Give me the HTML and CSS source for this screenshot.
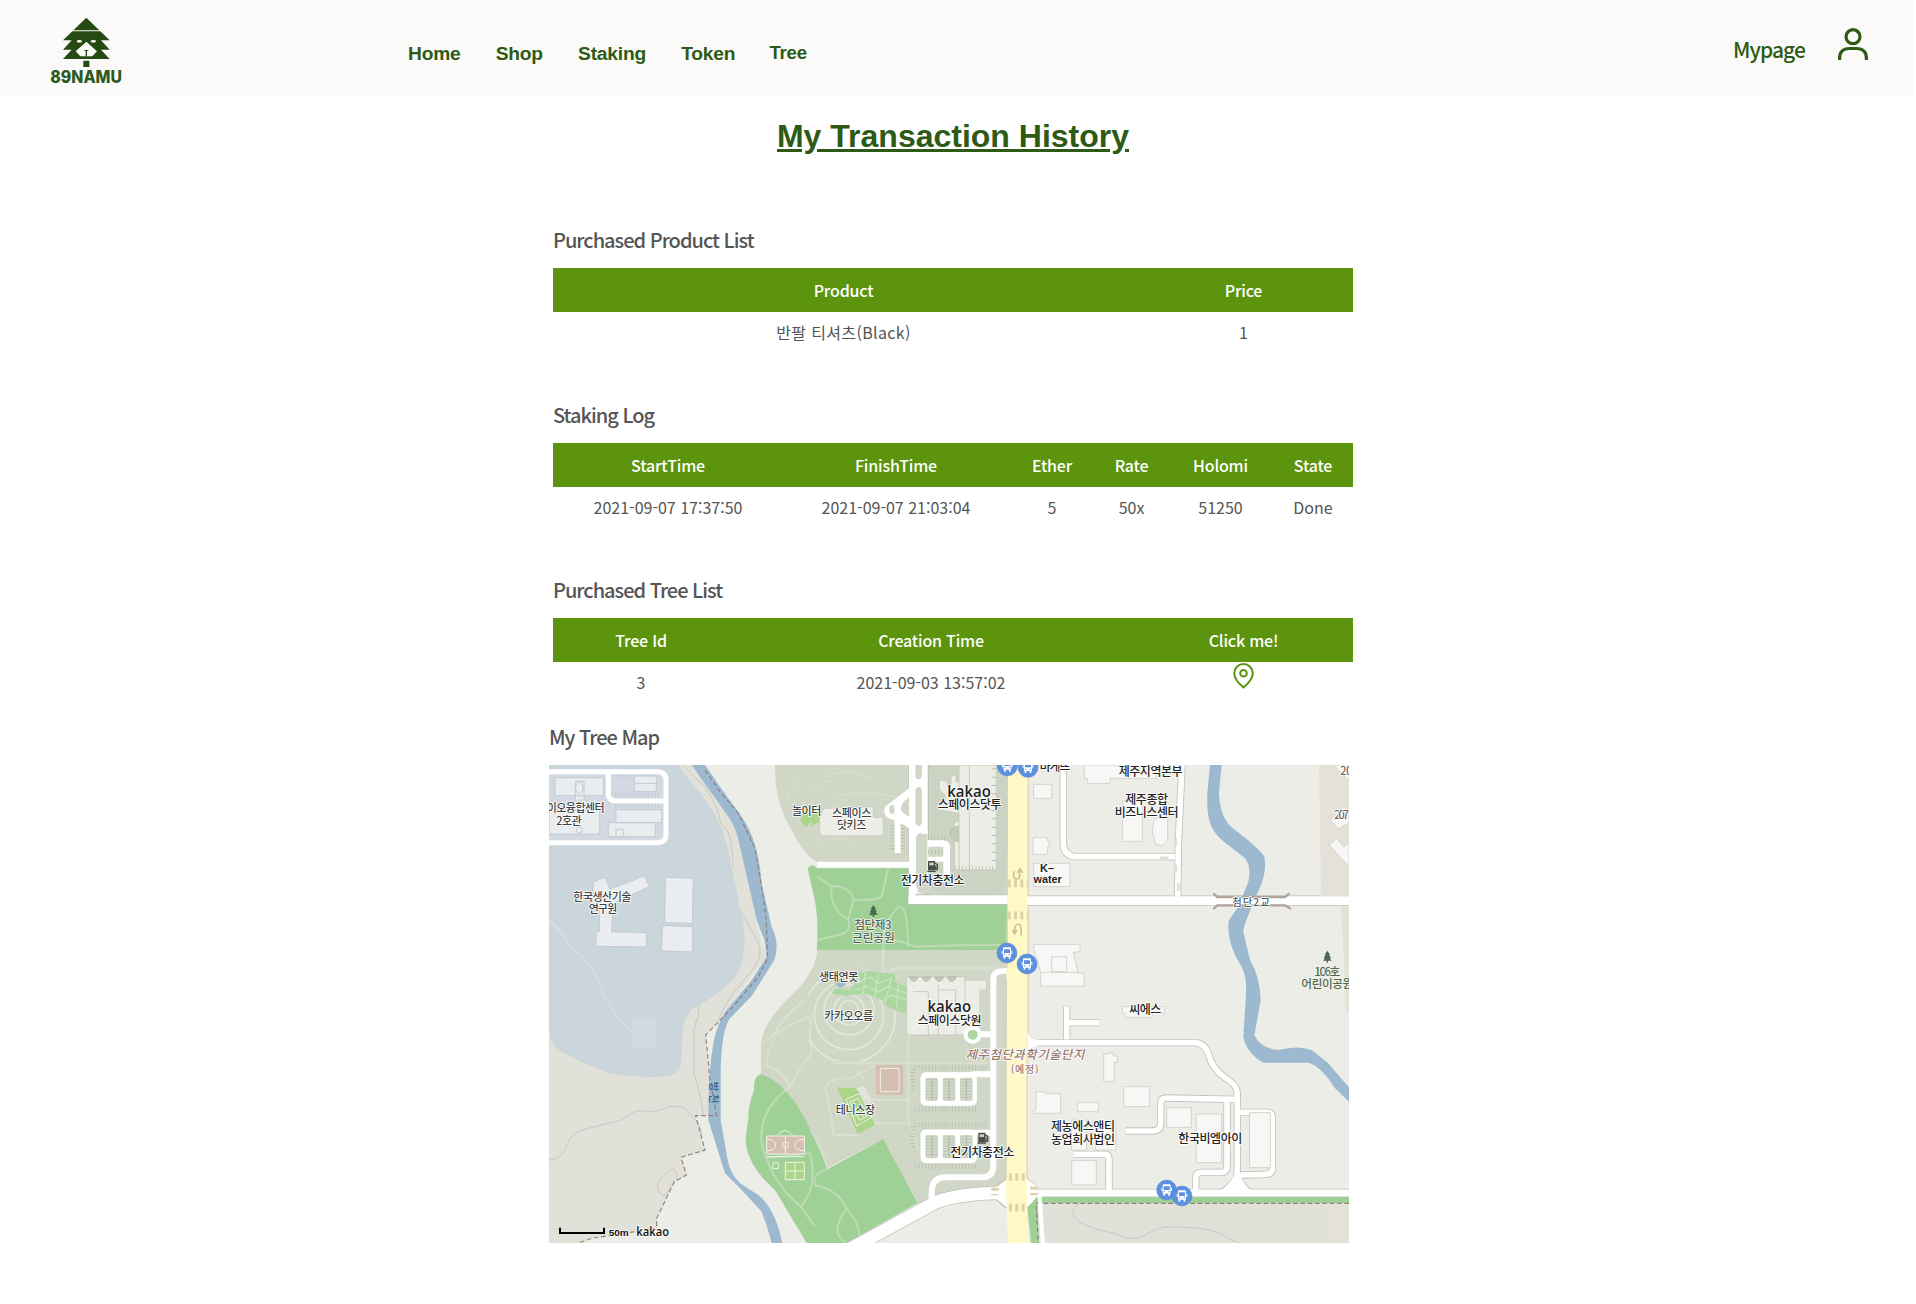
FILE: index.html
```html
<!DOCTYPE html>
<html lang="ko">
<head>
<meta charset="utf-8">
<title>89NAMU - My Transaction History</title>
<link rel="stylesheet" href="styles.css">
</head>
<body>
<header class="header">
  <svg class="logo" viewBox="0 0 240 291">
    <path class="logo-fill" d="M121 53L160 91H82zM79 94H163L191 121H165L191 149H165L191 177H51L77 149H51L77 121H51zM112 182H130V201H112z"/>
    <path class="logo-cut" d="M121 125L153 154L139 169H103L89 154z"/>
    <ellipse class="logo-cut" cx="100" cy="124" rx="8" ry="4"/><ellipse class="logo-cut" cx="142" cy="124" rx="8" ry="4"/>
    <path class="logo-fill" d="M119 154L113 150H129L123 154V169H119z"/>
    <text class="logo-text" x="13" y="248" textLength="215" lengthAdjust="spacingAndGlyphs">89NAMU</text>
  </svg>
  <nav class="nav">
    <a>Home</a><a>Shop</a><a>Staking</a><a>Token</a><a class="nav-tree">Tree</a>
  </nav>
  <a class="mypage">Mypage</a>
  <svg class="user" viewBox="0 0 30 32"><circle cx="15" cy="8.7" r="7"/><path d="M1.6 32V30.500Q1.600 20.500 11.500 20.500H18.500Q28.400 20.500 28.400 30.500V32"/></svg>
</header>
<main class="main">
  <h1 class="title">My Transaction History</h1>
  <section class="block">
    <h2>Purchased Product List</h2>
    <table>
      <colgroup><col class="w580"><col class="w220"></colgroup>
      <tr><th>Product</th><th>Price</th></tr>
      <tr><td class="product">반팔 티셔츠(Black)</td><td>1</td></tr>
    </table>
  </section>
  <section class="block">
    <h2>Staking Log</h2>
    <table>
      <colgroup><col class="w229"><col class="w227"><col class="w85"><col class="w74"><col class="w104"><col class="w81"></colgroup>
      <tr><th>StartTime</th><th>FinishTime</th><th>Ether</th><th>Rate</th><th>Holomi</th><th>State</th></tr>
      <tr><td>2021-09-07 17:37:50</td><td>2021-09-07 21:03:04</td><td>5</td><td>50x</td><td>51250</td><td>Done</td></tr>
    </table>
  </section>
  <section class="block">
    <h2>Purchased Tree List</h2>
    <table>
      <colgroup><col class="w175"><col class="w405"><col class="w220"></colgroup>
      <tr><th>Tree Id</th><th>Creation Time</th><th>Click me!</th></tr>
      <tr><td>3</td><td>2021-09-03 13:57:02</td><td class="pin-cell"><svg class="pin" viewBox="0 0 21 26"><path d="M10.500 24.500C7 21.500 1.200 16 1.200 10.200A9.300 9.200 0 0 1 19.800 10.200C19.800 16 14 21.500 10.500 24.500z"/><circle cx="10.500" cy="10.300" r="3.300"/></svg></td></tr>
    </table>
  </section>
  <section class="map-block">
    <h2>My Tree Map</h2>
    <svg class="map" viewBox="12 15 2400 1434">
      <defs>
        <g id="bus"><circle r="30" class="bus-bg"/><path class="bus-fg" d="M-12 -14Q-12 -17 -9 -17H9Q12 -17 12 -14V11H10V17H5V11H-5V17H-10V11H-12zM-16 -7H-13V3H-16zM13 -7H16V3H13z"/><path class="bus-bg2" d="M-9 -11H9V0H-9zM-9 4H-5V7H-9zM5 4H9V7H5z"/></g>
        <g id="fuel"><path class="dark" d="M-13 -16H8V12H-13zM-15 13H10V17H-15z"/><path class="olive" d="M-9 -11H4V-3H-9z"/><path class="fuel-hose" d="M8 -10L15 -5V10H10V0H8"/></g>
        <g id="fir"><path d="M0 -18L8 -6H5L11 4H7L13 12H2V18H-2V12H-13L-7 4H-11L-5 -6H-8z"/></g>
        <g id="lot"><rect class="lot-base" width="172" height="104" rx="18"/><g class="stall"><rect x="16" y="18" width="38" height="70" rx="6"/><rect x="68" y="18" width="38" height="70" rx="6"/><rect x="120" y="18" width="38" height="70" rx="6"/></g><path class="stall-lines" d="M24 22V84M44 22V84M76 22V84M96 22V84M128 22V84M148 22V84"/><path class="stall-line" d="M35 22V84M87 22V84M139 22V84"/><path class="ticks" d="M-14 -12H200"/><path class="ticks" d="M-14 113H172"/><path class="ticks" d="M-22 -8V60"/></g>
        <clipPath id="ring-clip"><path d="M790 640H1085V905H830L790 860z"/></clipPath>
      </defs>
      <rect class="land" x="12" y="15" width="2400" height="1434"/>

      <path class="beige" d="M12 15H480L580 230L640 510L665 590L545 750L515 790L482 825L495 960L490 1067H450L480 1170L408 1192L424 1245L388 1265L335 1375V1405L250 1418L140 1435L100 1449H12z"/>
      <path class="contour" d="M415 15Q440 45 480 80Q520 140 527 190Q555 215 560 255L565 320M586 450Q610 490 640 550Q655 580 630 620L560 705Q530 750 517 790M462 730L460 770Q443 800 447 850V940Q468 1010 475 1065M12 1200Q55 1198 68 1150Q80 1115 130 1105L230 1080Q270 1045 300 1053Q320 1060 350 1048Q410 1022 440 1065Q470 1100 470 1125M395 1260Q400 1225 378 1228Q340 1255 337 1275Q340 1310 362 1305Q375 1280 388 1265"/>
      <path class="campus" d="M12 15H400C425 55 450 75 470 105C525 175 548 245 560 320L595 490Q608 580 575 645Q540 695 440 748Q415 775 413 820L408 915Q405 940 375 947Q290 957 200 942Q130 920 50 875Q12 850 12 815z"/>
      <path class="campus-path" d="M12 480Q55 520 75 560Q140 610 155 650Q180 720 205 750Q225 790 262 815"/>
      <path class="campus-lot" d="M259 776L330 774L332 862L262 864zM12 36H363V246H12z"/>
      <path class="stall-line2" d="M205 47H265M200 105H350M210 137H350"/>
      <path class="campus-road" d="M12 35H335Q363 35 363 60V225Q363 248 335 248H12M190 38V98Q190 123 215 123H360"/>
      <path class="campus-b" d="M30 53H175V107H30zM12 150H164V222H12zM91 64H117V125H91zM100 120H125V150H100zM268 48H334V94H268zM268 70H334M213 149H350V188H213zM190 188H331V230H190zM213 208H236V230H213zM145 366L180 351L195 388L299 347L313 380L205 430L200 515L304 518V561L152 559L154 515H163V440L143 430zM361 352L445 354L442 490L359 488zM352 496L442 500V576L350 573z"/>
      <ellipse class="campus-b" cx="103" cy="83" rx="11" ry="18"/><circle class="campus-b" cx="103" cy="210" r="9"/>

      <path class="river" d="M440 15L500 100L550 170Q575 205 585 260L635 480L658 540L665 590L620 660L545 750Q510 800 502 870Q490 940 490 1080L540 1240L590 1290L650 1355Q668 1400 680 1449H712Q690 1345 640 1305L585 1270Q555 1240 548 1200L527 1080V930Q530 810 555 775L620 708L688 600Q705 550 680 500L650 370Q640 240 590 170L525 80L480 15z"/>
      <path class="border" d="M480 30L525 95L580 160L630 265L648 370L663 470L668 595L640 650L560 745L482 825L495 960L515 1067H452L480 1170L408 1192L424 1245L388 1265L335 1375V1405L250 1418L140 1435L100 1449"/>

      <path class="park" d="M690 15Q688 130 740 210Q780 290 815 305V325H1090V15zM1090 15H1388V405H1140L1090 380zM817 568H1388V1270L1330 1300L1120 1330L1015 1137L845 1225L795 1105Q730 980 648 945V850Q655 790 725 720Q815 640 817 568z"/>
      <path class="park-path thin" d="M725 120Q750 55 800 35M760 200Q770 80 860 60M840 50Q900 20 985 55M860 115Q930 85 1050 110M815 250Q900 220 930 255M1390 630H1040Q960 650 925 600"/>
      <path class="olive2" d="M1150 15H1385V370L1360 402H1140z"/>
      <path class="green" d="M790 335Q785 318 805 315L815 323H1090V432H1388V570H815Q822 480 808 415zM650 943Q625 945 627 990Q608 1040 610 1080Q598 1140 605 1165Q620 1230 690 1290L785 1449H905L1118 1328L1015 1137L848 1227L795 1105Q730 970 650 943z"/>
      <path class="park-path" d="M817 350L860 378Q850 440 910 480Q920 520 880 525L817 540M860 378Q920 380 925 418Q980 425 1010 410L1030 323M910 480L925 418M1015 570V535Q1015 490 1060 440Q1090 435 1088 560M1015 535Q1080 545 1110 560Q1200 555 1388 555"/>
      <path class="park-path" d="M1015 570V640M1035 625H1380M650 850Q715 800 795 770M780 720Q690 790 680 850Q655 920 670 920Q720 940 735 980M735 980Q760 930 800 880Q790 820 800 760M735 980Q640 1050 650 1150Q680 1270 768 1340Q820 1280 795 1180L660 1195M768 1340L810 1400M795 1110Q830 1160 848 1227Q800 1240 810 1275Q880 1290 905 1345Q945 1390 945 1440M905 1345Q850 1420 905 1449M1090 825V1090L1140 1215M860 910H1330M1090 1090H980M865 1125H940M865 1125Q850 1000 840 990Q850 950 920 955L990 915M1090 1020H980M930 930L960 960"/>
      <g class="rings" clip-path="url(#ring-clip)"><circle cx="912" cy="750" r="28"/><circle cx="912" cy="750" r="45"/><circle cx="912" cy="750" r="75"/><circle cx="912" cy="765" r="104"/><circle cx="912" cy="770" r="138"/></g>
      <path class="bright" d="M765 140L800 135L812 150L795 160L812 165V190L795 187L785 202L768 185zM800 155L840 160L838 178L815 190L800 200zM876 983L938 984L990 1095L938 1122z"/>
      <path class="court-line" d="M903 1018L945 1000L980 1072L935 1098zM914 1026L940 1015L967 1068L944 1081zM926 1042L956 1070M922 1050L945 1040"/>
      <path class="court-side" d="M932 985L957 977L980 1020L973 1035z"/>
      <path class="grove" d="M935 640L975 632L1050 643V665L1085 680V760Q1030 750 1010 720L960 700L900 708L860 700L870 685L915 690L930 670L950 668z"/>
      <path class="grove-line" d="M945 665L975 650L1000 670L1040 655M930 690L965 680L1000 695L1030 680L1085 700M960 632L955 700M1000 640L990 710M1040 650L1020 730M1085 720L1040 705L1010 725M1060 670L1055 745"/>
      <path class="river" d="M865 665L895 650L902 675L885 685z"/>
      <path class="clay" d="M993 915H1074V1004H993zM665 1128H778V1182H665z"/>
      <path class="court-line" d="M1006 925H1062V995H1006zM665 1128H778V1182H665zM665 1190H778M721 1128V1182M665 1138Q692 1138 692 1155Q692 1172 665 1172M778 1138Q750 1138 750 1155Q750 1172 778 1172M695 1128Q720 1095 745 1128"/>
      <circle class="court-line" cx="721" cy="1155" r="9"/>
      <path class="bright court-line" d="M721 1207H778V1259H721zM750 1207V1259M721 1233H778"/>
      <path class="court-line" d="M684 1208H700V1226H684z"/>

      <g class="road-edge"><path class="w20" d="M815 314H1095M1385 633Q1345 630 1345 655V1215Q1345 1250 1315 1252H1200Q1160 1252 1160 1300V1320M1285 823H1345M1275 943H1345M1275 1118H1345"/>
        <path class="w18" d="M1555 15V255Q1560 290 1595 290H1890M1898 410L1900 250L1911 15M1565 740V838M1565 788H1663M1448 848H1945Q1978 848 1990 880Q2000 925 2040 953Q2077 975 2077 1000V1290M1742 1113H1825Q1847 1113 1847 1090V1030Q1847 1014 1865 1014L2070 1018M2046 1018V1220Q2046 1237 2025 1237H1970Q1952 1237 1952 1255V1295M2080 1057H2165Q2182 1057 2182 1075V1225Q2182 1243 2160 1243L2087 1245M1585 1183H1680Q1692 1183 1692 1200V1290"/>
        <path class="w28" d="M1090 419H1390M1440 422H2412"/><path class="w22" d="M1440 1299H2412"/><path class="w44" d="M910 1470L1160 1333Q1220 1300 1400 1297"/>
        <path class="flare-edge" d="M2026 1290Q2066 1262 2069 1240M2120 1290Q2090 1270 2086 1240M1355 1278L1390 1253M1355 1320L1385 1345M1445 1253L1480 1287M1445 1345L1478 1313"/></g>
      <path class="olive-line" d="M1092 15H1150V405H1092z"/>
      <g class="road"><path class="w20" d="M815 314H1095M1385 633Q1345 630 1345 655V1215Q1345 1250 1315 1252H1200Q1160 1252 1160 1300V1320M1285 823H1345M1275 943H1345M1275 1118H1345"/>
        <path class="w18" d="M1555 15V255Q1560 290 1595 290H1890M1898 410L1900 250L1911 15M1565 740V838M1565 788H1663M1448 848H1945Q1978 848 1990 880Q2000 925 2040 953Q2077 975 2077 1000V1290M1742 1113H1825Q1847 1113 1847 1090V1030Q1847 1014 1865 1014L2070 1018M2046 1018V1220Q2046 1237 2025 1237H1970Q1952 1237 1952 1255V1295M2080 1057H2165Q2182 1057 2182 1075V1225Q2182 1243 2160 1243L2087 1245M1585 1183H1680Q1692 1183 1692 1200V1290"/>
        <path class="w28" d="M1090 419H1390M1440 422H2412"/><path class="w22" d="M1440 1299H2412"/><path class="w44" d="M910 1470L1160 1333Q1220 1300 1400 1297"/></g>
      <path class="white" d="M1092 15H1148V240H1195Q1215 242 1215 262V345H1195V305H1150V345L1092 433zM2026 1292Q2066 1262 2070 1235H2085Q2090 1270 2120 1292zM1355 1280L1390 1255V1345L1355 1318zM1440 1250L1480 1285V1312L1440 1347zM1448 815Q1450 840 1480 838V858Q1450 860 1448 885z"/>
      <path class="olive" d="M1111 15H1131V50Q1121 66 1111 50zM1111 90Q1121 70 1131 90V190Q1121 206 1111 190zM1113 235Q1120 212 1132 222H1147V345Q1150 385 1180 403H1145Q1113 400 1113 370zM1150 260H1195V290H1150z"/>
      <path class="white" d="M1092 85L1020 140Q1010 175 1050 180L1092 205z"/><path class="olive" d="M1092 112Q1060 135 1070 155L1092 170zM1033 140Q1042 128 1048 140V160Q1038 166 1033 155z"/>
      <path class="white" d="M1049 175H1067V279H1049z"/><path class="ticks vert" d="M1042 195V275"/><path class="ticks vert" d="M1073 195V275"/><path class="ticks" d="M1158 235H1205"/><path class="ticks" d="M1150 275H1195"/>
      <path class="pale" d="M823 177L835 145L985 140V172H1015V228H825zM1240 15H1354V330H1228V185H1240V160L1180 150V125H1200V105L1183 90V62H1207V75H1218V45H1233V65H1240z"/>
      <path class="pale" d="M1242 15V320M1273 15V330M1085 650H1260V660H1325V690H1305V825H1085zM1180 675V825M1180 690H1232V825M1105 695H1150V825M1260 650V730"/>
      <path class="ticks" d="M1232 324H1352"/><path class="ticks wide" d="M1347 25V325"/>
      <path class="hatch" d="M1240 198Q1215 205 1216 225Q1220 240 1240 245zM1092 651H1120Q1106 678 1092 651zM1130 651H1158Q1144 678 1130 651zM1168 651H1196Q1182 678 1168 651zM1206 651H1234Q1220 678 1206 651z"/>
      <use href="#lot" x="1125" y="935"/><use href="#lot" x="1125" y="1107"/>
      <path class="white" d="M1280 935H1345V951H1280zM1280 1110H1345V1126H1280z"/>
      <circle class="white" cx="1283" cy="824" r="27"/><circle class="grove" cx="1283" cy="824" r="15"/>

      <path class="green" d="M1447 1345L1475 1311H2412V1330H1478L1482 1449H1458z"/>
      <path class="beige" d="M1478 1331H2412V1449H1482z"/>
      <path class="contour" d="M1605 1331Q1560 1360 1610 1390Q1650 1410 1710 1420Q1755 1445 1790 1430Q1850 1395 1880 1401Q2010 1402 2040 1430L2082 1449"/>
      <path class="beige2" d="M2322 15H2412V408H2328zM2388 440H2412V760Q2395 740 2402 710zM2340 1332H2412V1449H2370z"/>
      <path class="border" d="M2412 1330H1473L1480 1449"/>
      <path class="lane" d="M1483 1300L1494 1455"/>

      <path class="river" d="M1995 15L1987 100Q1983 175 2005 210Q2020 235 2050 255L2100 295Q2120 320 2110 365L2080 440L2052 480Q2045 510 2060 560Q2070 590 2090 620Q2105 650 2103 690L2102 720L2095 830Q2105 880 2155 908H2290Q2330 920 2370 985L2412 1025V982Q2370 935 2350 910L2300 870Q2260 855 2200 870Q2145 865 2128 825L2140 760L2147 720Q2145 650 2115 600L2095 515Q2095 500 2120 440L2150 370Q2165 325 2158 290Q2140 262 2070 210Q2025 180 2022 100L2030 15z"/>
      <path class="bridge-deck" d="M1990 423H2240"/>
      <path class="bridge" d="M2007 402L2017 411H2220L2231 402M2007 445L2017 436H2220L2235 445"/>

      <path class="bldg" d="M1466 73H1520V115H1466zM1464 233H1507V245H1513V262H1507V283H1464zM1466 310H1575V380H1466zM1467 553H1605V575L1585 577L1600 640H1617V678H1487V635L1467 570zM1520 590H1565V635H1520zM1490 637H1600M1618 15H1835V55H1695V70H1628V55H1618zM1733 122H1792V244H1733zM1828 175H1868V240L1850 258L1830 250L1822 212zM1732 740H1858V760H1822V772H1740V760H1732zM1676 882H1693V878H1705V888H1717V907H1708V964H1676zM1736 980H1814V1040H1736zM1597 1027H1660V1055H1597zM1865 1043H1939V1102H1865zM1954 1062H2030V1208H1954zM2113 1058H2176V1223H2113zM1465 1050H1473V995H1502V1001H1547V1060H1465zM1580 1202H1654V1275H1580zM1580 1080H1625V1170H1580zM1652 1090H1713V1170H1652zM2356 180L2395 140L2412 155V190L2380 206zM2353 255L2375 235L2395 260L2412 250V320zM2365 15L2412 62V15z"/>

      <path class="yellow" d="M1388 15H1448L1445 900V1290L1450 1449H1389L1383 1290V900z"/>
      <path class="yellow-edge" d="M1387 15V405M1450 15V405M1387 433V625M1450 440V820M1384 660V1255M1446 880V1255"/>
      <path class="zebra" d="M1388 370H1448M1388 466H1448M1392 1251H1445M1392 1343H1445"/><path class="zebra" d="M1350 1283V1306M1467 1280V1306"/>
      <path class="turn" d="M1406 334V346Q1406 357 1415 357Q1424 357 1424 346V330M1417 338L1425 327L1433 338M1428 527V505Q1427 492 1418 492Q1409 494 1409 518M1402 510L1409 521L1416 510"/>
      <path class="road-mark" d="M1845 294H1870M1892 235V258M1892 315V338M1900 370V392"/>

      <use href="#bus" x="1387" y="18"/><use href="#bus" x="1449" y="22"/><use href="#bus" x="1386" y="579"/><use href="#bus" x="1446" y="612"/><use href="#bus" x="1865" y="1290"/><use href="#bus" x="1911" y="1308"/>
      <use href="#fuel" x="1162" y="319"/><use href="#fuel" x="1313" y="1134"/><use class="fir" href="#fir" x="985" y="453"/><use class="fir" href="#fir" x="2347" y="590"/>

      <g class="label">
        <text x="92" y="155" textLength="174">이오융합센터</text><text x="72" y="194" textLength="76">2호관</text>
        <text x="172" y="422" textLength="174">한국생산기술</text><text x="174" y="458" textLength="86">연구원</text>
        <text x="785" y="165" textLength="88">놀이터</text><text x="920" y="172" textLength="118">스페이스</text><text x="920" y="208" textLength="88">닷키즈</text>
        <text class="strong" x="1274" y="148" textLength="192">스페이스닷투</text><text class="brand" x="1272" y="112" textLength="131" lengthAdjust="spacingAndGlyphs">kakao</text>
        <text class="strong" x="1163" y="374" textLength="192">전기차충전소</text><text class="strong" x="1530" y="33" textLength="92">바게뜨</text>
        <text class="strong latin" x="1506" y="336">K–</text><text class="strong latin" x="1508" y="368" textLength="85">water</text>
        <text class="green-label" x="984" y="508" textLength="112">첨단제3</text><text class="green-label" x="985" y="547" textLength="128">근린공원</text>
        <text x="881" y="662" textLength="118">생태연못</text><text x="911" y="780" textLength="146">카카오오름</text>
        <text class="brand" x="1213" y="757" textLength="131" lengthAdjust="spacingAndGlyphs">kakao</text><text class="strong" x="1214" y="795" textLength="192">스페이스닷원</text>
        <text x="931" y="1062" textLength="118">테니스장</text><text class="strong" x="1312" y="1192" textLength="192">전기차충전소</text>
        <text class="district" x="1440" y="896" textLength="356">제주첨단과학기술단지</text><text class="district-small" x="1439" y="938" textLength="84">(예정)</text>
        <text class="strong" x="1817" y="47" textLength="192">제주지역본부</text><text class="strong" x="1805" y="131" textLength="128">제주종합</text><text class="strong" x="1805" y="171" textLength="192">비즈니스센터</text>
        <text class="bridge-label" x="2118" y="437" textLength="112">첨단2교</text>
        <text class="brown" x="2404" y="45" textLength="36">20</text><text class="brown" x="2390" y="177" textLength="44">207</text>
        <text class="green-label" x="2347" y="647" textLength="78">106호</text><text class="green-label" x="2347" y="683" textLength="156">어린이공원</text>
        <text class="strong" x="1801" y="762" textLength="96">씨에스</text><text class="strong" x="1614" y="1112" textLength="192">제농에스앤티</text><text class="strong" x="1614" y="1151" textLength="192">농업회사법인</text><text class="strong" x="1996" y="1149" textLength="192">한국비엠아이</text>
        <text class="river-label" transform="translate(495 998) rotate(90)" textLength="66">방천</text>
      </g>
      <path class="scale" d="M45 1403V1419H177V1403"/>
      <text class="scale-text" x="191" y="1429" textLength="60" lengthAdjust="spacingAndGlyphs">50m</text><text class="kakao-mark" x="274" y="1427" textLength="98" lengthAdjust="spacingAndGlyphs">kakao</text>
    </svg>
  </section>
</main>
</body>
</html>
```
FILE: styles.css
```css
* { box-sizing: border-box; }
body { margin: 0; background: #fff; color: #555; font-family: "Noto Sans CJK KR", sans-serif; height: 1304px; overflow: hidden; }
.header { display: flex; align-items: flex-start; width: 1913px; height: 97px; background: #fbfaf8; color: #2d5a14; }
.logo { width: 80px; height: 97px; margin-left: 46px; }
.logo-fill { fill: #264b12; }
.logo-cut { fill: #fbfaf8; }
.logo-text { fill: #2d5a1e; font: 800 52px Inter, sans-serif; }
.nav { display: flex; gap: 35.2px; margin-left: 282px; padding-top: 43px; font: bold 19.2px/22px "Liberation Sans", sans-serif; letter-spacing: -0.2px; }
.nav-tree { margin: -1px 0 0 -1px; font-size: 18.6px; }
.mypage { margin-left: auto; padding-top: 34px; font-size: 21px; line-height: 31px; font-weight: 500; letter-spacing: -0.9px; }
.user { width: 30px; height: 32px; margin: 28px 45px 0 33px; fill: none; stroke: #2d5a14; stroke-width: 3.2; }
.main { width: 800px; margin-left: 553px; }
.title { margin: 0; padding-top: 21px; height: 125px; text-align: center; font: bold 32px/37px "Liberation Sans", sans-serif; color: #2d5a14; text-decoration: underline; }
h2 { margin: 0; font-size: 20px; line-height: 30px; font-weight: 500; letter-spacing: -1px; }
.block { height: 175px; padding-top: 3px; }
.block h2 { height: 43px; }
table { width: 800px; table-layout: fixed; border-collapse: collapse; font-size: 16px; line-height: 24px; text-align: center; font-feature-settings: "calt" 0; }
th { height: 44px; padding: 0 0 0 1px; background: #5c940d; color: #fff; font-weight: 500; letter-spacing: -0.2px; }
td { height: 42px; padding: 0 0 2px 1px; }
.product { letter-spacing: 0.35px; }
.pin-cell { vertical-align: top; line-height: 0; padding: 1px 0 0; }
.pin { width: 21px; height: 26px; fill: none; stroke: #5c940d; stroke-width: 2; }
.w580 { width: 580px; } .w220 { width: 220px; } .w229 { width: 229px; } .w227 { width: 227px; } .w85 { width: 85px; }
.w74 { width: 74px; } .w104 { width: 104px; } .w81 { width: 81px; } .w175 { width: 175px; } .w405 { width: 405px; }
.map-block { margin: -25px 0 0 -4px; }
.map-block h2 { height: 43px; padding-top: 0; }
.map { display: block; width: 800px; height: 478px; overflow: hidden; }

/* map areas */
.land { fill: #ecede7; } .beige { fill: #e2e1d9; } .beige2 { fill: #e5e1d9; }
.campus { fill: #cbd5dc; } .campus-lot { fill: #d3d9e2; } .campus-b { fill: #e9edf0; stroke: #c3cad0; stroke-width: 3; }
.river { fill: #9db9d0; } .park { fill: #d1d7c6; } .olive { fill: #d1d7c6; } .olive2 { fill: #cbd3c2; }
.green { fill: #9fd096; } .bright { fill: #abd588; } .grove { fill: #abd7a0; } .clay { fill: #d6beb1; }
.court-side { fill: #e2e4dc; } .white { fill: #fff; } .pale { fill: #ecede7; stroke: #c9cdbf; stroke-width: 3; }
.bldg { fill: #f7f7f6; stroke: #d4d4ce; stroke-width: 3; } .yellow { fill: #fff9c6; } .dark { fill: #4b4d4b; }
.lot-base { fill: #fff; stroke: #c3c8ba; stroke-width: 2; } .stall { fill: #d1d7c6; } .hatch { fill: #c5ccbc; stroke: #a9b0a2; stroke-width: 2; }

/* map lines */
.contour, .campus-path, .campus-road, .border, .park-path, .rings, .court-line, .grove-line, .road path, .road-edge path, .lane, .bridge-deck, .bridge, .turn, .scale, .stall-line, .stall-lines, .ticks, .zebra, .yellow-edge, .road-mark, .olive-line, .fuel-hose, .stall-line2 { fill: none; }
.contour { stroke: #c8c8c3; stroke-width: 3; } .campus-path { stroke: #d5dce4; stroke-width: 6; } .campus-road { stroke: #fff; stroke-width: 15; }
.border { stroke: #927f77; stroke-width: 3.5; stroke-dasharray: 14 8; } .park-path { stroke: #e7eddf; stroke-width: 6; opacity: .42; } .park-path.thin { stroke-width: 3; }
.rings { stroke: #e8ece1; stroke-width: 5; opacity: .8; } .court-line { stroke: #f1f1e8; stroke-width: 3; } .bright.court-line { fill: #abd588; } .grove-line { stroke: #c8e3be; stroke-width: 4; }
.road { stroke: #fff; } .road-edge { stroke: #bfc0ba; } .road .w20 { stroke-width: 18; } .road-edge .w20 { stroke-width: 22; stroke: #d0d3c9; }
.road .w18 { stroke-width: 17; } .road-edge .w18 { stroke-width: 22; } .road .w28 { stroke-width: 26; } .road-edge .w28 { stroke-width: 31; }
.road .w22 { stroke-width: 21; } .road-edge .w22 { stroke-width: 26; } .road .w44 { stroke-width: 38; } .road-edge .w44 { stroke-width: 43; }
.flare-edge { stroke-width: 4; }
.lane { stroke: #fff; stroke-width: 12; } .bridge-deck { stroke: #fff; stroke-width: 26; } .bridge { stroke: #b0a29c; stroke-width: 7; stroke-linecap: round; } .turn { stroke: #cec29a; stroke-width: 5; }
.stall-line { stroke: #b4baac; stroke-width: 4; } .stall-lines { stroke: #bdc3b5; stroke-width: 14; stroke-dasharray: 2 7; }
.ticks { stroke: #b3baab; stroke-width: 14; stroke-dasharray: 2 8; } .ticks.wide { stroke-dasharray: 3 22; } .stall-line2 { stroke: #bcc6d0; stroke-width: 13; stroke-dasharray: 2 8; }
.zebra { stroke: #dcd4ad; stroke-width: 23; stroke-dasharray: 9 10; } .yellow-edge { stroke: #c2bfae; stroke-width: 2; } .road-mark { stroke: #dfddd5; stroke-width: 9; }
.olive-line { stroke: #bcc0b6; stroke-width: 3; } .fuel-hose { stroke: #4b4d4b; stroke-width: 4; }
.bus-bg { fill: #5b91de; stroke: #4c80cd; stroke-width: 1.5; } .bus-fg { fill: #fff; } .bus-bg2 { fill: #5b91de; } .fir { fill: #4e6550; }

/* map text */
.label text { font-size: 33px; text-anchor: middle; fill: #404242; stroke: #fff; stroke-width: 5px; stroke-linejoin: round; paint-order: stroke; font-weight: 500; }
.label .strong { font-size: 36px; fill: #222; } .label .latin { font-family: "Liberation Sans", sans-serif; font-weight: bold; font-size: 33px; }
.label .brand { font-family: "Open Sans", sans-serif; font-size: 46px; fill: #222; font-weight: 600; }
.label .green-label { font-size: 35px; fill: #53684f; stroke: #eef3ea; } .label .brown { fill: #725f56; }
.label .district { font-size: 37px; font-style: italic; fill: #957772; } .label .district-small { font-size: 30px; fill: #957772; }
.label .bridge-label { font-size: 31px; fill: #4b5e6e; } .label .river-label { font-size: 32px; fill: #35618c; stroke: none; }
.scale { stroke: #000; stroke-width: 6; } .scale-text { font: bold 27px "Liberation Sans", sans-serif; fill: #111; stroke: #fff; stroke-width: 4px; paint-order: stroke; }
.kakao-mark { font: 600 37px "Open Sans", sans-serif; fill: #111; stroke: #fff; stroke-width: 4px; paint-order: stroke; }
```
